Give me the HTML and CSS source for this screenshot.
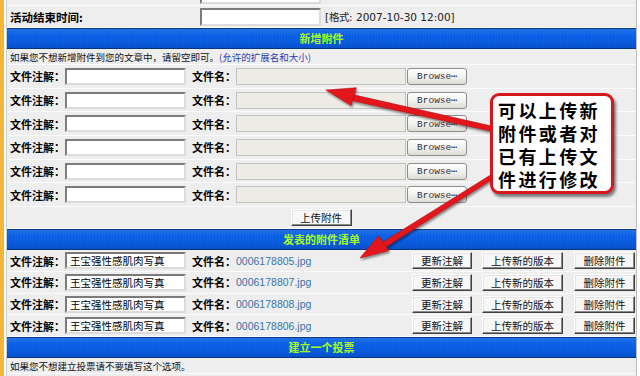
FILE: index.html
```html
<!DOCTYPE html>
<html lang="zh-CN">
<head>
  <meta charset="UTF-8" />
  <title>附件管理</title>
  <link rel="stylesheet" href="styles.css">
</head>
<body>

  <div class="frame">
    <div class="panel">

      <!-- previous row, only its bottom edge shows -->
      <div class="row field stub">
        <div class="label-cell">活动开始时间:</div>
        <div class="value-cell"><input class="text date" type="text" /><span class="hint">[格式: 2007-10-30 12:00]</span></div>
      </div>

      <div class="row field">
        <div class="label-cell">活动结束时间:</div>
        <div class="value-cell"><input class="text date" type="text" /><span class="hint">[格式: 2007-10-30 12:00]</span></div>
      </div>

      <!-- New attachments -->
      <div class="bar">新增附件</div>
      <div class="row note">如果您不想新增附件到您的文章中，请留空即可。<a class="ext-link" href="#">(允许的扩展名和大小)</a></div>

      <div class="row file">
        <span class="lbl">文件注解：</span><input class="text desc" type="text" />
        <span class="lbl name-lbl">文件名：</span><span class="file-box"></span><button class="browse">Browse⋯</button>
      </div>
      <div class="row file">
        <span class="lbl">文件注解：</span><input class="text desc" type="text" />
        <span class="lbl name-lbl">文件名：</span><span class="file-box"></span><button class="browse">Browse⋯</button>
      </div>
      <div class="row file">
        <span class="lbl">文件注解：</span><input class="text desc" type="text" />
        <span class="lbl name-lbl">文件名：</span><span class="file-box"></span><button class="browse">Browse⋯</button>
      </div>
      <div class="row file">
        <span class="lbl">文件注解：</span><input class="text desc" type="text" />
        <span class="lbl name-lbl">文件名：</span><span class="file-box"></span><button class="browse">Browse⋯</button>
      </div>
      <div class="row file">
        <span class="lbl">文件注解：</span><input class="text desc" type="text" />
        <span class="lbl name-lbl">文件名：</span><span class="file-box"></span><button class="browse">Browse⋯</button>
      </div>
      <div class="row file">
        <span class="lbl">文件注解：</span><input class="text desc" type="text" />
        <span class="lbl name-lbl">文件名：</span><span class="file-box"></span><button class="browse">Browse⋯</button>
      </div>

      <div class="row submit"><button class="btn upload">上传附件</button></div>

      <!-- Posted attachments -->
      <div class="bar">发表的附件清单</div>

      <div class="row item">
        <span class="lbl">文件注解：</span><input class="text desc" type="text" value="王宝强性感肌肉写真" />
        <span class="lbl name-lbl">文件名：</span><a class="file-link" href="#">0006178805.jpg</a>
        <div class="actions"><button class="btn act-a">更新注解</button><button class="btn act-b">上传新的版本</button><button class="btn act-c">删除附件</button></div>
      </div>
      <div class="row item">
        <span class="lbl">文件注解：</span><input class="text desc" type="text" value="王宝强性感肌肉写真" />
        <span class="lbl name-lbl">文件名：</span><a class="file-link" href="#">0006178807.jpg</a>
        <div class="actions"><button class="btn act-a">更新注解</button><button class="btn act-b">上传新的版本</button><button class="btn act-c">删除附件</button></div>
      </div>
      <div class="row item">
        <span class="lbl">文件注解：</span><input class="text desc" type="text" value="王宝强性感肌肉写真" />
        <span class="lbl name-lbl">文件名：</span><a class="file-link" href="#">0006178808.jpg</a>
        <div class="actions"><button class="btn act-a">更新注解</button><button class="btn act-b">上传新的版本</button><button class="btn act-c">删除附件</button></div>
      </div>
      <div class="row item">
        <span class="lbl">文件注解：</span><input class="text desc" type="text" value="王宝强性感肌肉写真" />
        <span class="lbl name-lbl">文件名：</span><a class="file-link" href="#">0006178806.jpg</a>
        <div class="actions"><button class="btn act-a">更新注解</button><button class="btn act-b">上传新的版本</button><button class="btn act-c">删除附件</button></div>
      </div>

      <!-- Poll -->
      <div class="bar">建立一个投票</div>
      <div class="row note">如果您不想建立投票请不要填写这个选项。</div>
      <div class="row note"></div>
    </div>

    <!-- annotation drawn over the form -->
    <svg class="arrows" width="640" height="376" viewBox="0 0 640 376">
      <defs>
        <filter id="shade" x="-10%" y="-10%" width="120%" height="130%">
          <feDropShadow dx="1" dy="2" stdDeviation="1.2" flood-color="#000" flood-opacity="0.45" />
        </filter>
      </defs>
      <g fill="#e3161c" stroke="#b30d12" stroke-width="0.6" filter="url(#shade)">
        <polygon points="500,143.5 354.5,110.6 353.6,116.4 499,148.5" />
        <polygon points="328,106 358.3,103.8 353.1,121.4" />
        <polygon points="507,182 384.2,258.5 387.4,263.3 509,186" />
        <polygon points="362,274 380.4,251.9 390.9,266.6" />
      </g>
    </svg>
    <div class="callout">
      <div class="callout-line">可以上传新</div>
      <div class="callout-line">附件或者对</div>
      <div class="callout-line">已有上传文</div>
      <div class="callout-line">件进行修改</div>
    </div>
  </div>

</body>
</html>
```

FILE: styles.css
```css
body {
  margin: 0;
  background: #fff;
  font-family: "Noto Sans CJK SC", sans-serif;
  font-size: 11px;
  color: #000;
  overflow: hidden;
}
.frame {
  position: relative;
  width: 631px;
  border-left: 4px solid #f5b43a;
  padding-left: 2px;
}
.panel {
  border-left: 1px solid #cfcfcf;
  border-right: 1px solid #bdbdbd;
  background: #eeeeee;
}
.row {
  display: flex;
  align-items: center;
  box-sizing: border-box;
  padding-left: 3px;
  border-bottom: 1px solid #fbfbfb;
}
.field {
  height: 22px;
}
.stub {
  margin-top: -16px;
}
.stub .label-cell,
.stub .hint {
  visibility: hidden;
}
.label-cell {
  width: 190px;
  font-weight: bold;
  font-size: 11.5px;
}
.value-cell {
  display: flex;
  align-items: center;
}
.hint {
  margin-left: 4px;
  font-family: "DejaVu Sans", sans-serif;
  font-size: 10.5px;
  color: #222;
}
.text {
  box-sizing: border-box;
  margin: 0;
  padding: 0 3px;
  background: #fff;
  border: 2px solid;
  border-color: #7b7b7b #dcdcdc #dcdcdc #7b7b7b;
  font-family: "Noto Sans CJK SC", sans-serif;
  font-size: 10.5px;
  color: #000;
  outline: none;
}
.date {
  width: 121px;
  height: 18px;
}
.desc {
  width: 121px;
  height: 17px;
}
.bar {
  box-sizing: border-box;
  height: 21px;
  line-height: 19px;
  text-align: center;
  font-weight: bold;
  font-size: 11px;
  color: #a8ff1e;
  border-top: 1px solid #0b3a8a;
  border-bottom: 1px solid #07357e;
  background:
    repeating-linear-gradient(90deg, rgba(0, 0, 40, 0.06) 0 1px, transparent 1px 3px),
    linear-gradient(#2473e6, #0b62ea 35%, #0a5de0 70%, #0751cc);
}
.note {
  height: 16px;
  font-size: 9.5px;
  color: #111;
}
.ext-link {
  color: #2a3cb0;
  text-decoration: none;
}
.file {
  height: 23.7px;
}
.lbl {
  font-weight: bold;
  font-size: 11px;
  white-space: nowrap;
}
.lbl:first-child {
  width: 55px;
}
.name-lbl {
  width: 44px;
  margin-left: 6px;
}
.file-box {
  box-sizing: border-box;
  width: 170px;
  height: 17px;
  background: #ecebe6;
  border: 1px solid #c3c2bc;
}
.browse {
  box-sizing: border-box;
  width: 60px;
  height: 17px;
  margin: 0 0 0 1px;
  padding: 0;
  border: 1px solid #8d8d8d;
  border-radius: 3px;
  background: linear-gradient(#fefefe, #f2f2ef 50%, #dddcd6);
  font-family: "Liberation Mono", monospace;
  font-size: 9.5px;
  color: #333;
}
.btn {
  box-sizing: border-box;
  height: 17px;
  margin: 0;
  padding: 0;
  background: #f7f7f7;
  border: 1px solid;
  border-color: #fff #404040 #404040 #fff;
  box-shadow: inset -1px -1px 0 #8a8a8a, inset 1px 1px 0 #e4e4e4;
  font-family: "Noto Sans CJK SC", sans-serif;
  font-size: 10.5px;
  color: #111;
}
.submit {
  height: 22px;
  justify-content: center;
  padding-left: 0;
}
.upload {
  width: 61px;
  margin-left: -1px;
}
.item {
  height: 21.75px;
}
.file-link {
  font-family: "Liberation Sans", sans-serif;
  font-size: 10.5px;
  color: #3a72a8;
  text-decoration: none;
}
.actions {
  display: flex;
  margin-left: auto;
  margin-right: 1px;
}
.act-a {
  width: 60px;
}
.act-b {
  width: 81px;
  margin-left: 10px;
}
.act-c {
  width: 61px;
  margin-left: 11px;
}
.arrows {
  position: absolute;
  left: -6px;
  top: 0;
}
.callout {
  position: absolute;
  left: 486px;
  top: 109px;
  box-sizing: border-box;
  width: 124px;
  height: 101px;
  padding: 3px 0 0 5px;
  background: #fff;
  border: 3px solid #d6171c;
  border-radius: 9px;
  box-shadow: 2px 3px 3px rgba(0, 0, 0, 0.5);
  font-weight: bold;
  font-size: 18px;
  letter-spacing: 2.4px;
  color: #000;
  white-space: nowrap;
}
.callout-line {
  height: 23px;
  line-height: 23px;
}
```
